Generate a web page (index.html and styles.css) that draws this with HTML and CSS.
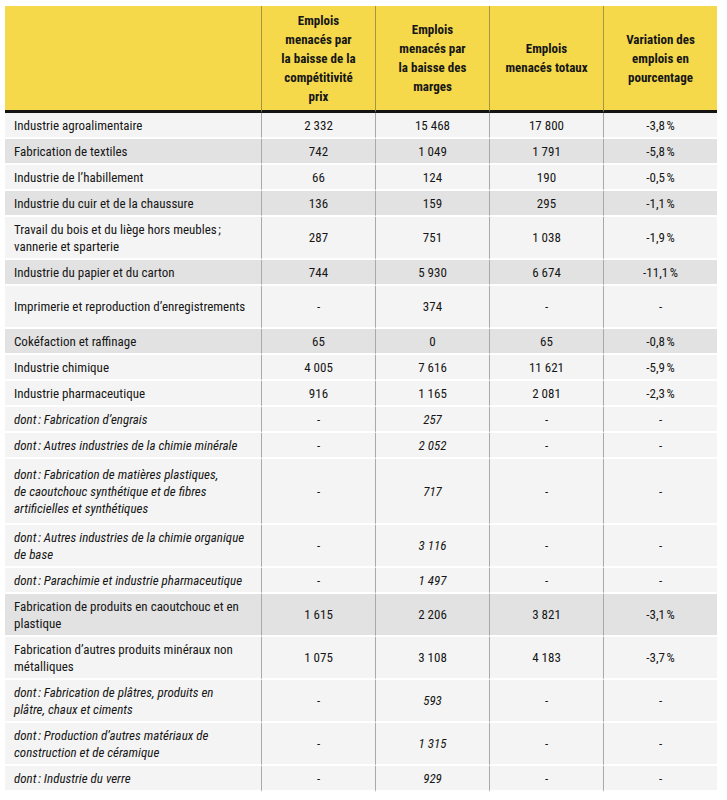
FILE: index.html
```html
<!DOCTYPE html>
<html lang="fr">
<head>
<meta charset="utf-8">
<title>Emplois menacés</title>
<link rel="stylesheet" href="styles.css">
</head>
<body>
<table class="tbl">
  <colgroup>
    <col class="c-label">
    <col class="c-num">
    <col class="c-num">
    <col class="c-num">
    <col class="c-num">
  </colgroup>
  <thead>
    <tr class="head">
      <th class="h-empty"></th>
      <th>Emplois<br>menacés par<br>la baisse de la<br>compétitivité<br>prix</th>
      <th>Emplois<br>menacés par<br>la baisse des<br>marges</th>
      <th>Emplois<br>menacés totaux</th>
      <th>Variation des<br>emplois en<br>pourcentage</th>
    </tr>
  </thead>
  <tbody>
    <tr class="s light"><td>Industrie agroalimentaire</td><td>2&nbsp;332</td><td>15&nbsp;468</td><td>17&nbsp;800</td><td>-3,8&#8239;%</td></tr>
    <tr class="s gray"><td>Fabrication de textiles</td><td>742</td><td>1&nbsp;049</td><td>1&nbsp;791</td><td>-5,8&#8239;%</td></tr>
    <tr class="s light"><td>Industrie de l’habillement</td><td>66</td><td>124</td><td>190</td><td>-0,5&#8239;%</td></tr>
    <tr class="s gray"><td>Industrie du cuir et de la chaussure</td><td>136</td><td>159</td><td>295</td><td>-1,1&#8239;%</td></tr>
    <tr class="d light"><td>Travail du bois et du liège hors meubles&#8239;;<br>vannerie et sparterie</td><td>287</td><td>751</td><td>1&nbsp;038</td><td>-1,9&#8239;%</td></tr>
    <tr class="s gray"><td>Industrie du papier et du carton</td><td>744</td><td>5&nbsp;930</td><td>6&nbsp;674</td><td>-11,1&#8239;%</td></tr>
    <tr class="d light"><td>Imprimerie et reproduction d’enregistrements</td><td>-</td><td>374</td><td>-</td><td>-</td></tr>
    <tr class="s gray"><td>Cokéfaction et raffinage</td><td>65</td><td>0</td><td>65</td><td>-0,8&#8239;%</td></tr>
    <tr class="s light"><td>Industrie chimique</td><td>4&nbsp;005</td><td>7&nbsp;616</td><td>11&nbsp;621</td><td>-5,9&#8239;%</td></tr>
    <tr class="s light"><td>Industrie pharmaceutique</td><td>916</td><td>1&nbsp;165</td><td>2&nbsp;081</td><td>-2,3&#8239;%</td></tr>
    <tr class="s light sub"><td>dont&#8239;: Fabrication d’engrais</td><td>-</td><td>257</td><td>-</td><td>-</td></tr>
    <tr class="s light sub"><td>dont&#8239;: Autres industries de la chimie minérale</td><td>-</td><td>2&nbsp;052</td><td>-</td><td>-</td></tr>
    <tr class="t light sub"><td>dont&#8239;: Fabrication de matières plastiques,<br>de caoutchouc synthétique et de fibres<br>artificielles et synthétiques</td><td>-</td><td>717</td><td>-</td><td>-</td></tr>
    <tr class="d light sub"><td>dont&#8239;: Autres industries de la chimie organique<br>de base</td><td>-</td><td>3&nbsp;116</td><td>-</td><td>-</td></tr>
    <tr class="s light sub"><td>dont&#8239;: Parachimie et industrie pharmaceutique</td><td>-</td><td>1&nbsp;497</td><td>-</td><td>-</td></tr>
    <tr class="d gray"><td>Fabrication de produits en caoutchouc et en<br>plastique</td><td>1&nbsp;615</td><td>2&nbsp;206</td><td>3&nbsp;821</td><td>-3,1&#8239;%</td></tr>
    <tr class="d light"><td>Fabrication d’autres produits minéraux non<br>métalliques</td><td>1&nbsp;075</td><td>3&nbsp;108</td><td>4&nbsp;183</td><td>-3,7&#8239;%</td></tr>
    <tr class="d light sub"><td>dont&#8239;: Fabrication de plâtres, produits en<br>plâtre, chaux et ciments</td><td>-</td><td>593</td><td>-</td><td>-</td></tr>
    <tr class="d light sub"><td>dont&#8239;: Production d’autres matériaux de<br>construction et de céramique</td><td>-</td><td>1&nbsp;315</td><td>-</td><td>-</td></tr>
    <tr class="s light sub"><td>dont&#8239;: Industrie du verre</td><td>-</td><td>929</td><td>-</td><td>-</td></tr>
  </tbody>
</table>
</body>
</html>
```

FILE: styles.css
```css
html, body {
  margin: 0;
  padding: 0;
  background: #ffffff;
}

body {
  font-family: "Liberation Sans Narrow", "Roboto Condensed", "Liberation Sans", Arial, sans-serif;
  color: #161616;
  font-size: 13px;
}

.tbl {
  margin: 6px 0 0 5px;
  width: 712px;
  border-collapse: separate;
  border-spacing: 0;
  table-layout: fixed;
}

.c-label { width: 256px; }
.c-num { width: 114px; }

.head th {
  height: 104px;
  background: #f5d94a;
  font-weight: bold;
  font-size: 13px;
  line-height: 19px;
  text-align: center;
  vertical-align: middle;
  padding: 0 4px;
  border-bottom: 3px solid #141414;
  border-left: 1px solid #a39446;
}

.head th.h-empty {
  border-left: none;
}

tbody td {
  padding: 0 4px;
  line-height: 17px;
  text-align: center;
  vertical-align: middle;
  border-bottom: 2px solid #ffffff;
  border-left: 1px solid #a9a9a9;
  white-space: nowrap;
}

tbody td:first-child {
  text-align: left;
  padding-left: 9px;
  border-left: none;
}

tr.s { height: 26px; }
tr.d { height: 43px; }
tr.t { height: 66px; }

tr.light td { background: #f4f4f4; }
tr.gray td { background: #e2e2e2; }

tr.sub td { font-style: italic; }
```
